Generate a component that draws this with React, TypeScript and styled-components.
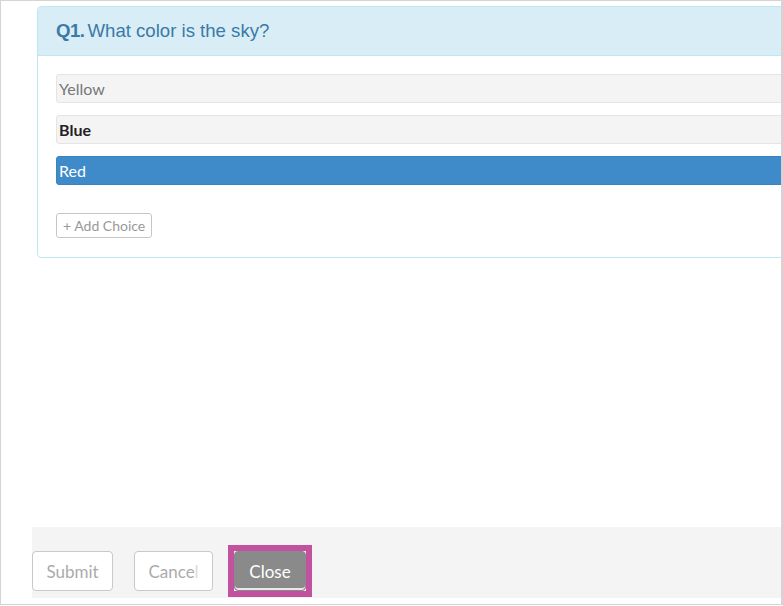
import React from 'react';
import styled, { createGlobalStyle } from 'styled-components';

const GlobalStyle = createGlobalStyle`
  html, body {
    margin: 0;
    padding: 0;
    background: #fff;
  }
  body {
    font-family: Lato, "Open Sans", sans-serif;
  }
`;

const Frame = styled.div`
  width: 783px;
  height: 605px;
  box-sizing: border-box;
  border: 1px solid #d4d4d4;
  border-right-width: 2px;
  overflow: hidden;
  display: flex;
  flex-direction: column;
  background: #fff;
`;

const Content = styled.div`
  flex: 1;
  padding: 5px 0 0 36px;
`;

const QuestionCard = styled.div`
  border: 1px solid #bce8f1;
  border-radius: 4px;
  margin-right: -8px;
  background: #fff;
`;

const QuestionHeader = styled.div`
  height: 48px;
  display: flex;
  align-items: center;
  padding-left: 18px;
  background: #d9edf7;
  border-bottom: 1px solid #bce8f1;
  border-radius: 3px 3px 0 0;
  color: #3a7aa6;
  font-family: "Liberation Sans", Arial, sans-serif;
  font-size: 18.6px;
`;

const QuestionNumber = styled.b`
  margin-right: 3px;
  letter-spacing: -0.5px;
`;

const ChoiceList = styled.div`
  display: flex;
  flex-direction: column;
  gap: 12px;
  padding: 18px 0 0 18px;
`;

const Choice = styled.div<{ $selected?: boolean; $bold?: boolean }>`
  height: 29px;
  box-sizing: border-box;
  display: flex;
  align-items: center;
  padding-left: 2px;
  border-radius: 3px;
  font-size: 16px;
  border: 1px solid ${(p) => (p.$selected ? '#3a82c0' : '#e4e4e4')};
  background: ${(p) => (p.$selected ? '#3f8bca' : '#f4f4f4')};
  color: ${(p) => (p.$selected ? '#fff' : p.$bold ? '#222' : '#777')};
  font-weight: ${(p) => (p.$bold ? 700 : 400)};
`;

const AddChoiceButton = styled.button`
  margin: 28px 0 19px 18px;
  height: 25px;
  padding: 0 6px;
  border: 1px solid #c6c6c6;
  border-radius: 3px;
  background: #fff;
  color: #999;
  font-family: Lato, sans-serif;
  font-size: 14px;
`;

const Footer = styled.div`
  margin: 0 0 6px 31px;
  height: 71px;
  box-sizing: border-box;
  padding-top: 24px;
  display: flex;
  align-items: flex-start;
  gap: 21px;
  background: #f4f4f4;
`;

const FooterButton = styled.button<{ $primary?: boolean; $width: number }>`
  position: relative;
  width: ${(p) => p.$width}px;
  height: 40px;
  border-radius: 4px;
  font-family: Lato, sans-serif;
  font-size: 17px;
  padding: 0;
  border: 1px solid ${(p) => (p.$primary ? '#8a8a8a' : '#c9c9c9')};
  background: ${(p) => (p.$primary ? '#8a8a8a' : '#fff')};
  color: ${(p) => (p.$primary ? '#fff' : '#ababab')};
  box-shadow: ${(p) => (p.$primary ? 'inset 0 -2px 0 #e8e8e8' : 'none')};
`;

/* focus ring drawn as a square frame around the active button */
const FocusRing = styled.span`
  position: absolute;
  inset: -7px;
  border: 6px solid #c2519f;
  pointer-events: none;
`;

const Faded = styled.span`
  color: #dcdcdc;
`;

const choices = [
  { label: 'Yellow' },
  { label: 'Blue', bold: true },
  { label: 'Red', selected: true },
];

const App: React.FC = () => {
  return (
    <>
      <GlobalStyle />
      <Frame>
        <Content>
          <QuestionCard>
            <QuestionHeader>
              <QuestionNumber>Q1.</QuestionNumber>
              What color is the sky?
            </QuestionHeader>
            <ChoiceList>
              {choices.map((c) => (
                <Choice key={c.label} $bold={c.bold} $selected={c.selected}>
                  {c.label}
                </Choice>
              ))}
            </ChoiceList>
            <AddChoiceButton>+ Add Choice</AddChoiceButton>
          </QuestionCard>
        </Content>
        <Footer>
          <FooterButton $width={81}>Submit</FooterButton>
          <FooterButton $width={79}>
            Cance<Faded>l</Faded>
          </FooterButton>
          <FooterButton $width={72} $primary>
            Close
            <FocusRing />
          </FooterButton>
        </Footer>
      </Frame>
    </>
  );
};

export default App;
